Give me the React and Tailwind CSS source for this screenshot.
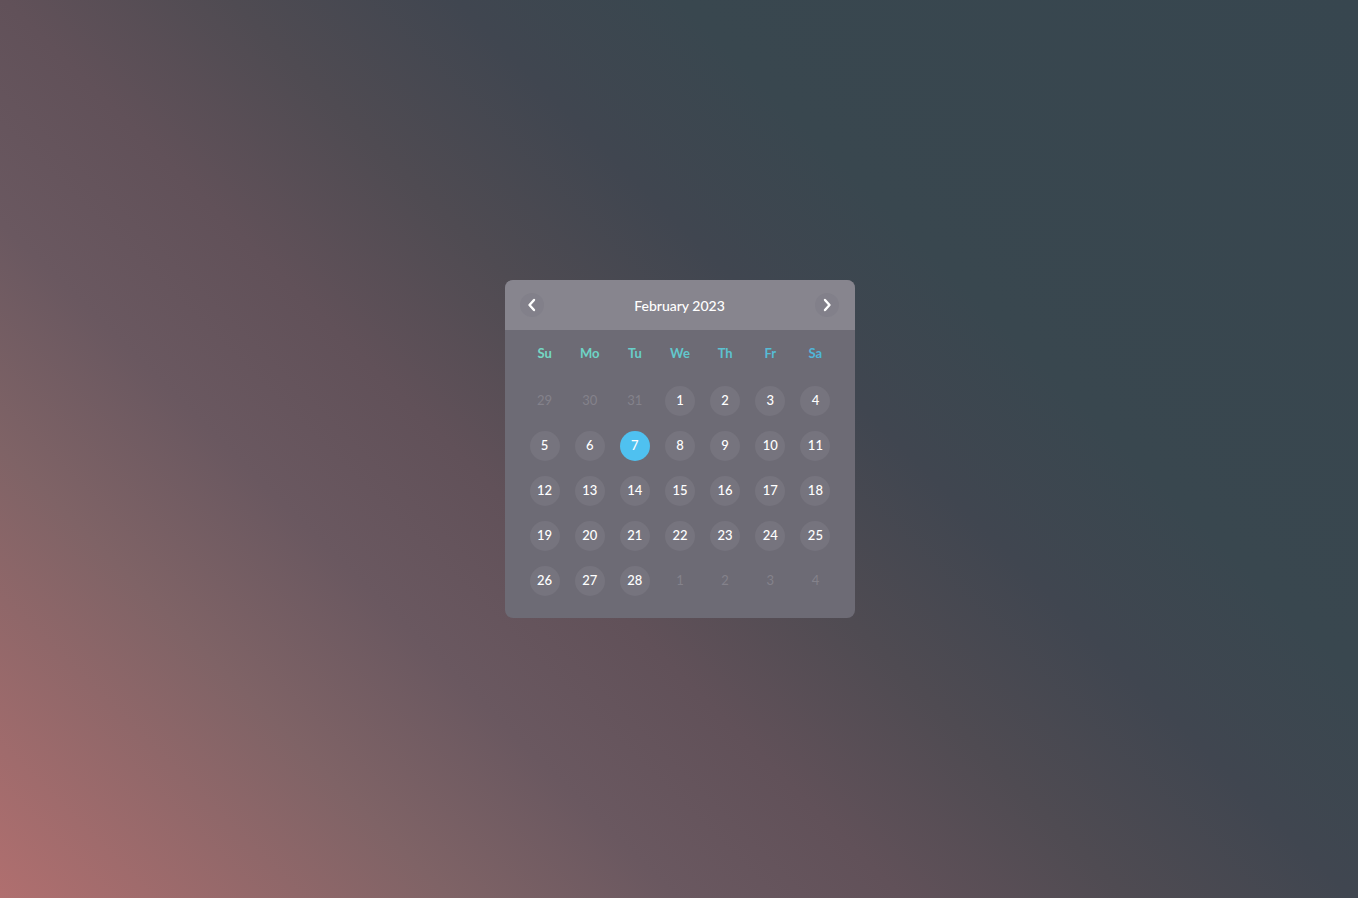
import React, { useState } from 'react';

const weekdays = [
    { label: 'Su', color: 'text-[#74d8c4]' },
    { label: 'Mo', color: 'text-[#6ed3c6]' },
    { label: 'Tu', color: 'text-[#68cec9]' },
    { label: 'We', color: 'text-[#62c8cd]' },
    { label: 'Th', color: 'text-[#5cc2d1]' },
    { label: 'Fr', color: 'text-[#56bcd5]' },
    { label: 'Sa', color: 'text-[#50b6d9]' },
];

// Feb 2023 starts on Wednesday
const buildDays = () => {
    const days = [];
    [29, 30, 31].forEach(d => days.push({ day: d, muted: true }));
    for (let d = 1; d <= 28; d++) days.push({ day: d, muted: false });
    [1, 2, 3, 4].forEach(d => days.push({ day: d, muted: true }));
    return days;
};

const Chevron = ({ dir }) => (
    <svg width="10" height="14" viewBox="0 0 10 14" fill="none" stroke="white" strokeWidth="2.4" strokeLinecap="round" strokeLinejoin="round">
        {dir === 'left' ? <path d="M7 2L2.5 7 7 12" /> : <path d="M3 2l4.5 5L3 12" />}
    </svg>
);

export default function App() {
    const [selected, setSelected] = useState(7);
    const days = buildDays();

    return (
        <div
            className="w-full h-[898px] flex items-center justify-center bg-[linear-gradient(45deg,#b06f6f_0%,#7f6366_20%,#6a5860_30%,#615159_40%,#4f4b52_50%,#404650_60%,#39474f_70%,#37464f_100%)]"
            style={{ fontFamily: 'Lato, "Open Sans", sans-serif' }}
        >
            <div className="w-[350px] ml-[2px] rounded-lg overflow-hidden bg-[#6d6b75]">
                {/* Header */}
                <div className="h-[50px] bg-[#87858e] flex items-center justify-between pl-[15px] pr-[16px]">
                    <button className="w-[24px] h-[24px] rounded-full bg-[#82808a] flex items-center justify-center">
                        <Chevron dir="left" />
                    </button>
                    <span className="text-white text-[14px] font-medium">February 2023</span>
                    <button className="w-[24px] h-[24px] rounded-full bg-[#82808a] flex items-center justify-center">
                        <Chevron dir="right" />
                    </button>
                </div>

                {/* Body */}
                <div className="px-[17px] pt-[11px] pb-[15px]">
                    <div className="grid grid-cols-7 h-[26px] mb-[11px]">
                        {weekdays.map(w => (
                            <div key={w.label} className={`flex items-center justify-center text-[13px] font-bold ${w.color}`}>
                                {w.label}
                            </div>
                        ))}
                    </div>
                    <div className="grid grid-cols-7 auto-rows-[45px]">
                        {days.map((d, i) => (
                            <div key={i} className="flex items-center justify-center">
                                {d.muted ? (
                                    <span className="text-[13px] text-[#84828b]">{d.day}</span>
                                ) : (
                                    <button
                                        onClick={() => setSelected(d.day)}
                                        className={`w-[30px] h-[30px] rounded-full flex items-center justify-center text-[13px] font-medium text-white ${selected === d.day
                                            ? 'bg-[#4fc1f0]'
                                            : 'bg-[#76747e]'
                                            }`}
                                    >
                                        {d.day}
                                    </button>
                                )}
                            </div>
                        ))}
                    </div>
                </div>
            </div>
        </div>
    );
}
